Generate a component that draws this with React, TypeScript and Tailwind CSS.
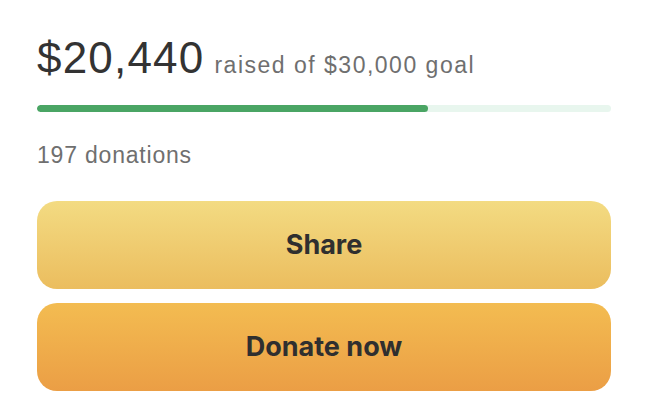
export default function App() {
  const raised = 20440;
  const goal = 30000;
  const pct = (raised / goal) * 100;
  return (
    <div className="w-[646px] h-[414px] bg-white">
      <div className="ml-[37px] w-[574px] pt-[36px]">
        <div className="flex h-[44px] items-baseline leading-none" style={{ fontFamily: '"Liberation Sans", Arial, sans-serif' }}>
          <span className="text-[44px] text-[#333333] tracking-[1.2px]">$20,440</span>
          <span className="ml-[10px] text-[23px] text-[#6f6f6f] tracking-[1.5px]">raised of $30,000 goal</span>
        </div>
        <div className="mt-[25px] h-[7px] w-full rounded-full bg-[#e8f6ee] overflow-hidden">
          <div className="h-full rounded-full bg-[#4aa564]" style={{ width: `${pct}%` }} />
        </div>
        <div
          className="mt-[32px] text-[23px] leading-none text-[#6f6f6f] tracking-[0.8px]"
          style={{ fontFamily: '"Liberation Sans", Arial, sans-serif' }}
        >
          197 donations
        </div>
        <div className="mt-[34px] flex flex-col gap-[14px]" style={{ fontFamily: 'Inter, "Liberation Sans", sans-serif' }}>
          <button className="h-[88px] w-full rounded-[20px] bg-gradient-to-b from-[#f3db82] to-[#ebbd5e] text-[27px] font-bold text-[#2f2f2f]">
            Share
          </button>
          <button className="h-[88px] w-full rounded-[20px] bg-gradient-to-b from-[#f3bc51] to-[#eb9e45] text-[27px] font-bold text-[#2f2f2f]">
            Donate now
          </button>
        </div>
      </div>
    </div>
  );
}
